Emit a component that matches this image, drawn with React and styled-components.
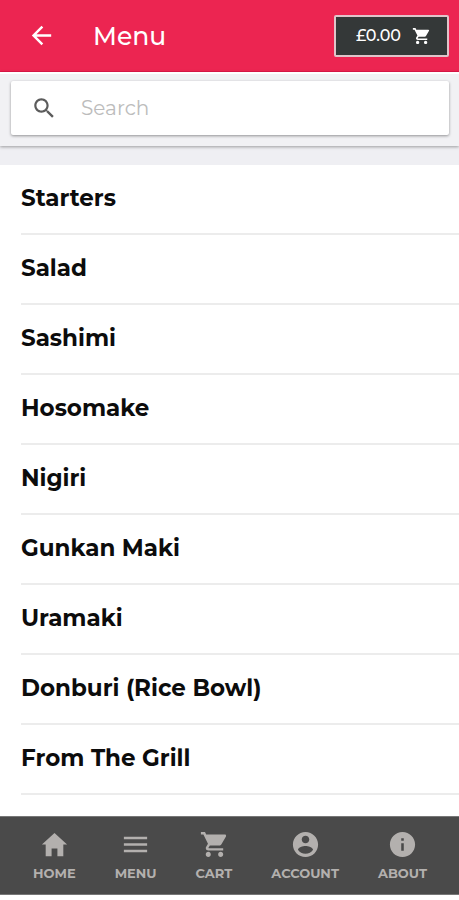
import styled, { createGlobalStyle } from 'styled-components'
import {
    IoMdArrowBack,
    IoMdCart,
    IoMdContact,
    IoMdHome,
    IoMdInformationCircle,
    IoMdMenu,
    IoMdSearch
} from 'react-icons/io'

const GlobalStyle = createGlobalStyle`
* {
    box-sizing: border-box;
}
body {
    margin: 0;
    background: #fff;
    font-family: Montserrat, Inter, sans-serif;
}
button, input {
    font-family: inherit;
}
`

const Page = styled.div`
display: flex;
flex-direction: column;
min-height: 100vh;
padding-bottom: 5px;
`

const Header = styled.header`
display: flex;
align-items: center;
height: 72px;
padding: 0 10px 0 27px;
background: #ec2551;
border-bottom: 1px solid #e3174a;
color: #fff;
`

const BackButton = styled.button`
display: flex;
padding: 0;
border: 0;
background: none;
color: inherit;
cursor: pointer;
`

const Title = styled.h1`
flex: 1;
margin: 0 0 0 37px;
font-size: 25px;
font-weight: 500;
line-height: 32px;
`

const CartButton = styled.button`
display: flex;
align-items: center;
justify-content: space-between;
width: 115px;
height: 42px;
padding: 0 16px 0 20px;
border: 2px solid #e0c4ca;
border-radius: 2px;
background: #343838;
color: #fff;
font-size: 16px;
font-weight: 500;
cursor: pointer;
`

const SearchBar = styled.div`
position: relative;
padding: 7px 10px 11px 11px;
border-top: 2px solid #fff;
background: #f1f1f4;
box-shadow: 0 1px 3px rgba(0, 0, 0, .35);
`

const SearchField = styled.label`
display: flex;
align-items: center;
gap: 24px;
height: 54px;
padding: 0 20px;
border-radius: 2px;
background: #fff;
box-shadow: 0 1px 3px rgba(0, 0, 0, .4);
color: #5c5c5c;

svg {
    flex: none;
}
`

const SearchInput = styled.input`
flex: 1;
min-width: 0;
padding: 0;
border: 0;
outline: 0;
background: none;
font-size: 20px;
line-height: 26px;

&::placeholder {
    color: #bcbcbc;
    opacity: 1;
}
`

const List = styled.ul`
margin: 0;
padding: 0 0 0 21px;
border-top: 19px solid #efeff3;
list-style: none;
`

const Row = styled.li`
height: 70px;
border-bottom: 2px solid #ececec;
`

const RowLink = styled.a`
display: block;
padding: 17px 0;
color: #0c0c0c;
font-size: 23px;
font-weight: 700;
line-height: 32px;
text-decoration: none;
`

const TabBar = styled.nav`
display: flex;
justify-content: space-between;
height: 79px;
margin-top: auto;
padding: 12px 32px 0 33px;
border-top: 1px solid #777;
border-bottom: 1px solid #777;
background: #4a4a4a;
`

const Tab = styled.a`
display: flex;
flex-direction: column;
align-items: center;
gap: 5px;
color: #b3b0ae;
font-size: 13px;
font-weight: 700;
line-height: 16px;
text-decoration: none;
`

const categories = [
    'Starters',
    'Salad',
    'Sashimi',
    'Hosomake',
    'Nigiri',
    'Gunkan Maki',
    'Uramaki',
    'Donburi (Rice Bowl)',
    'From The Grill'
]

const tabs = [
    { label: 'HOME', Icon: IoMdHome },
    { label: 'MENU', Icon: IoMdMenu },
    { label: 'CART', Icon: IoMdCart },
    { label: 'ACCOUNT', Icon: IoMdContact },
    { label: 'ABOUT', Icon: IoMdInformationCircle }
]

export default function App() {
    return (
        <Page>
            <GlobalStyle />
            <Header>
                <BackButton aria-label="Back"><IoMdArrowBack size={29} /></BackButton>
                <Title>Menu</Title>
                <CartButton>£0.00 <IoMdCart size={20} /></CartButton>
            </Header>
            <SearchBar>
                <SearchField>
                    <IoMdSearch size={26} />
                    <SearchInput type="text" placeholder="Search" aria-label="Search" />
                </SearchField>
            </SearchBar>
            <List>
                {categories.map(name => (
                    <Row key={name}><RowLink href="#">{name}</RowLink></Row>
                ))}
            </List>
            <TabBar>
                {tabs.map(({ label, Icon }) => (
                    <Tab key={label} href="#"><Icon size={31} />{label}</Tab>
                ))}
            </TabBar>
        </Page>
    )
}
